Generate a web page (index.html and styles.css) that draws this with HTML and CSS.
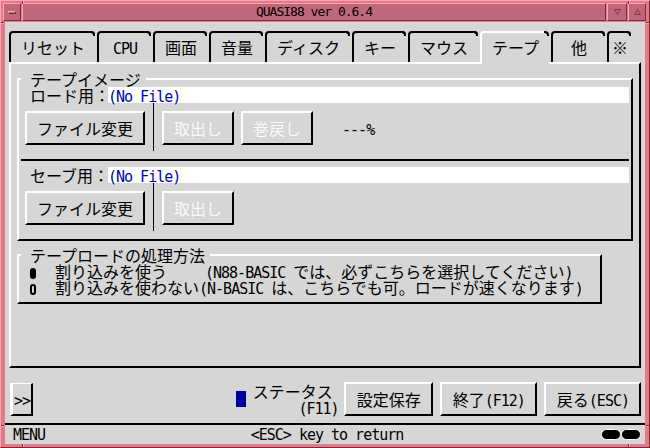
FILE: index.html
```html
<!DOCTYPE html>
<html lang="ja">
<head>
    <meta charset="UTF-8">
    <title>QUASI88 ver 0.6.4</title>
    <link rel="stylesheet" href="styles.css">
</head>
<body>
    <div class="window">
        <!-- resize grips on the frame -->
        <span class="grip v top" style="left:21px"></span>
        <span class="grip v top" style="left:627px"></span>
        <span class="grip v bottom" style="left:21px"></span>
        <span class="grip v bottom" style="left:627px"></span>
        <span class="grip h left" style="top:21px"></span>
        <span class="grip h right" style="top:21px"></span>
        <span class="grip h left" style="top:424px"></span>
        <span class="grip h right" style="top:424px"></span>

        <div class="titlebar">
            <div class="tb-menu"><span class="tb-dash"></span></div>
            <div class="tb-title">QUASI88 ver 0.6.4</div>
            <div class="tb-btn">
                <svg width="7" height="6" viewBox="0 0 7 6"><path d="M0.5 0.5H6.5L3.5 5.5Z" fill="none" stroke="#8a3242"/></svg>
            </div>
            <div class="tb-btn last">
                <svg width="7" height="6" viewBox="0 0 7 6"><path d="M0.5 5.5H6.5L3.5 0.5Z" fill="none" stroke="#8a3242"/></svg>
            </div>
        </div>

        <div class="client">
            <div class="tabs">
                <div class="tab">リセット</div>
                <div class="tab"><span class="en">CPU</span></div>
                <div class="tab">画面</div>
                <div class="tab">音量</div>
                <div class="tab">ディスク</div>
                <div class="tab">キー</div>
                <div class="tab">マウス</div>
                <div class="tab active">テープ</div>
                <div class="tab">他</div>
                <div class="tab narrow">※</div>
            </div>

            <div class="panel">
                <fieldset class="frame image-frame">
                    <legend>テープイメージ</legend>
                    <div class="file-row">
                        <span class="file-label">ロード用：</span>
                        <div class="entry"><span class="en">(No File)</span></div>
                    </div>
                    <div class="btn-row">
                        <button class="btn">ファイル変更</button>
                        <span class="vsep"></span>
                        <button class="btn" disabled>取出し</button>
                        <button class="btn" disabled>巻戻し</button>
                        <span class="en percent">---%</span>
                    </div>
                    <div class="hsep"></div>
                    <div class="file-row save">
                        <span class="file-label">セーブ用：</span>
                        <div class="entry"><span class="en">(No File)</span></div>
                    </div>
                    <div class="btn-row">
                        <button class="btn">ファイル変更</button>
                        <span class="vsep"></span>
                        <button class="btn" disabled>取出し</button>
                    </div>
                </fieldset>

                <fieldset class="frame mode-frame">
                    <legend>テープロードの処理方法</legend>
                    <div class="option"><span class="radio on"></span><span class="opt-name wide">割り込みを使う</span><span class="en">(N88-BASIC </span>では、必ずこちらを選択してください<span class="en">)</span></div>
                    <div class="option"><span class="radio"></span><span class="opt-name">割り込みを使わない</span><span class="en">(N-BASIC </span>は、こちらでも可。ロードが速くなります<span class="en">)</span></div>
                </fieldset>
            </div>

            <div class="footer">
                <button class="btn more"><span class="en">&gt;&gt;</span></button>
                <div class="status">
                    <span class="status-led"></span>
                    <div class="status-label">
                        <div>ステータス</div>
                        <div class="status-key"><span class="en">(F11)</span></div>
                    </div>
                </div>
                <button class="btn">設定保存</button>
                <button class="btn">終了<span class="en">(F12)</span></button>
                <button class="btn">戻る<span class="en">(ESC)</span></button>
            </div>

            <div class="statusbar">
                <span class="en">MENU</span>
                <span class="en">&lt;ESC&gt; key to return</span>
                <span class="leds"><span class="led"></span><span class="led"></span></span>
            </div>
        </div>
    </div>
</body>
</html>
```

FILE: styles.css
```css
/* QUASI88 menu screen */
body {
    margin: 0;
    background-color: #d6d6d6;
}

.window {
    position: relative;
    width: 650px;
    height: 448px;
    box-sizing: border-box;
    padding: 2px 3px 3px 2px;
    background-color: #e67887;
    border: 1px solid;
    border-color: #ffa8b4 #7c2a3a #7c2a3a #ffa8b4;
    font-family: "Noto Sans CJK JP", sans-serif;
    font-size: 16px;
    line-height: 16px;
    color: #000;
}

.en {
    font-family: "DejaVu Sans Mono", monospace;
    font-size: 15px;
    line-height: 12px;
    letter-spacing: -1px;
}

/* frame grips */
.grip {
    position: absolute;
    box-sizing: border-box;
}

.grip.v {
    width: 2px;
    height: 3px;
    border-left: 1px solid #7c2a3a;
    border-right: 1px solid #ffa8b4;
}

.grip.h {
    width: 3px;
    height: 2px;
    border-top: 1px solid #7c2a3a;
    border-bottom: 1px solid #ffa8b4;
}

.grip.top { top: 0; }
.grip.bottom { bottom: 0; }
.grip.left { left: 0; }
.grip.right { right: 0; }

/* title bar */
.titlebar {
    display: flex;
    gap: 1px;
    height: 18px;
}

.tb-menu, .tb-title, .tb-btn {
    box-sizing: border-box;
    height: 18px;
    background-color: #c0677a;
    border: 1px solid;
    border-color: #ffa8b4 #7c2a3a #7c2a3a #ffa8b4;
}

.tb-menu {
    width: 18px;
    display: flex;
    align-items: center;
    justify-content: center;
}

.tb-dash {
    width: 8px;
    height: 3px;
    box-sizing: border-box;
    border: 1px solid;
    border-color: #ffa8b4 #7c2a3a #7c2a3a #ffa8b4;
}

.tb-title {
    flex: 1;
    text-align: center;
    font-family: "DejaVu Sans Mono", monospace;
    font-size: 13px;
    line-height: 16px;
    letter-spacing: -1px;
}

.tb-btn {
    width: 20px;
    display: flex;
    align-items: center;
    justify-content: center;
}

.tb-btn.last {
    width: 18px;
}

/* client area */
.client {
    margin: 1px 1px 0 2px;
    height: 422px;
    background-color: #d6d6d6;
    display: flex;
    flex-direction: column;
}

/* tabs */
.tabs {
    display: flex;
    align-items: flex-end;
    height: 31px;
    margin: 9px 0 0 4px;
}

.tab {
    position: relative;
    box-sizing: border-box;
    height: 31px;
    min-width: 54px;
    margin-right: 2px;
    padding: 6px 10px 0;
    border-top: 2px solid #000;
    border-left: 2px solid #000;
    border-radius: 4px 4px 0 0;
    text-align: center;
    white-space: nowrap;
}

.tab::after {
    content: "";
    position: absolute;
    top: -2px;
    right: 0;
    width: 5px;
    height: 5px;
    box-sizing: border-box;
    border-top: 2px solid #000;
    border-right: 2px solid #000;
    border-top-right-radius: 4px;
}

.tab.active {
    height: 33px;
    margin-bottom: -2px;
    z-index: 1;
    background-color: #d6d6d6;
    border-color: #fff;
}

.tab.narrow {
    min-width: 0;
    margin-right: 0;
    padding: 6px 3px 0;
}

/* main panel */
.panel {
    height: 306px;
    box-sizing: border-box;
    margin: 0 4px;
    border: 2px solid;
    border-color: #fff #000 #000 #fff;
}

.frame {
    margin: 7px 6px 0;
    padding: 0 0 8px 0;
    min-width: 0;
    border: 2px solid;
    border-color: #fff #000 #000 #fff;
}

.frame legend {
    margin-left: 2px;
    padding: 0 5px 0 9px;
    line-height: 16px;
}

.file-row {
    display: flex;
    height: 16px;
    padding-left: 11px;
}

.file-row.save {
    margin-top: 6px;
}

.file-label {
    width: 78px;
    white-space: nowrap;
}

.entry {
    flex: 1;
    height: 16px;
    margin-right: 2px;
    background-color: #fff;
    color: #0000c0;
    line-height: 16px;
}

.btn-row {
    display: flex;
    align-items: flex-start;
    height: 48px;
    padding-left: 6px;
}

.btn {
    box-sizing: border-box;
    height: 34px;
    padding: 0 10px;
    background-color: #d6d6d6;
    border: 2px solid;
    border-color: #fff #000 #000 #fff;
    font: inherit;
    line-height: 16px;
    color: #000;
    white-space: nowrap;
}

.btn:disabled {
    color: #fafafa;
}

.btn-row .btn {
    margin-top: 8px;
    margin-right: 7px;
}

.vsep {
    width: 1px;
    height: 48px;
    margin: 0 8px 0 1px;
    background-color: #000;
}

.percent {
    margin: 21px 0 0 22px;
}

.hsep {
    height: 2px;
    margin: 8px 2px 0;
    background-color: #000;
}

.mode-frame {
    width: 585px;
    box-sizing: border-box;
    margin-top: 6px;
    padding: 0 0 7px 0;
}

.option {
    height: 16px;
    padding-left: 11px;
    white-space: pre;
}

.radio {
    display: inline-block;
    width: 6px;
    height: 11px;
    box-sizing: border-box;
    margin-right: 19px;
    border: 2px solid #000;
    border-radius: 3px;
    vertical-align: -1px;
}

.radio.on {
    background-color: #000;
}

.opt-name {
    display: inline-block;
}

.opt-name.wide {
    width: 150px;
}

/* footer */
.footer {
    display: flex;
    align-items: flex-start;
    height: 55px;
    box-sizing: border-box;
    padding: 14px 4px 0 5px;
}

.footer .btn {
    padding: 0 10px 0 11px;
    margin-left: 7px;
}

.footer .btn.more {
    width: 23px;
    height: 33px;
    margin: 1px 0 0 0;
    padding: 0 0 0 1px;
    border-left-width: 3px;
    border-top-width: 1px;
    text-align: left;
}

.status {
    display: flex;
    margin: 1px 5px 0 auto;
}

.status-led {
    width: 10px;
    height: 16px;
    margin: 8px 7px 0 0;
    background-color: #0000a0;
}

.status-label {
    width: 86px;
    white-space: nowrap;
}

.status-key {
    text-align: right;
}

.status + .btn {
    margin-left: 0;
}

/* status bar */
.statusbar {
    display: grid;
    grid-template-columns: 1fr auto 1fr;
    align-items: center;
    height: 21px;
    box-sizing: border-box;
    padding: 0 4px 0 8px;
    border-top: 2px solid #000;
}

.leds {
    justify-self: end;
    display: flex;
}

.led {
    width: 20px;
    height: 11px;
    box-sizing: border-box;
    background-color: #000;
    border: 1px solid #fff;
    border-radius: 6px;
}
```
